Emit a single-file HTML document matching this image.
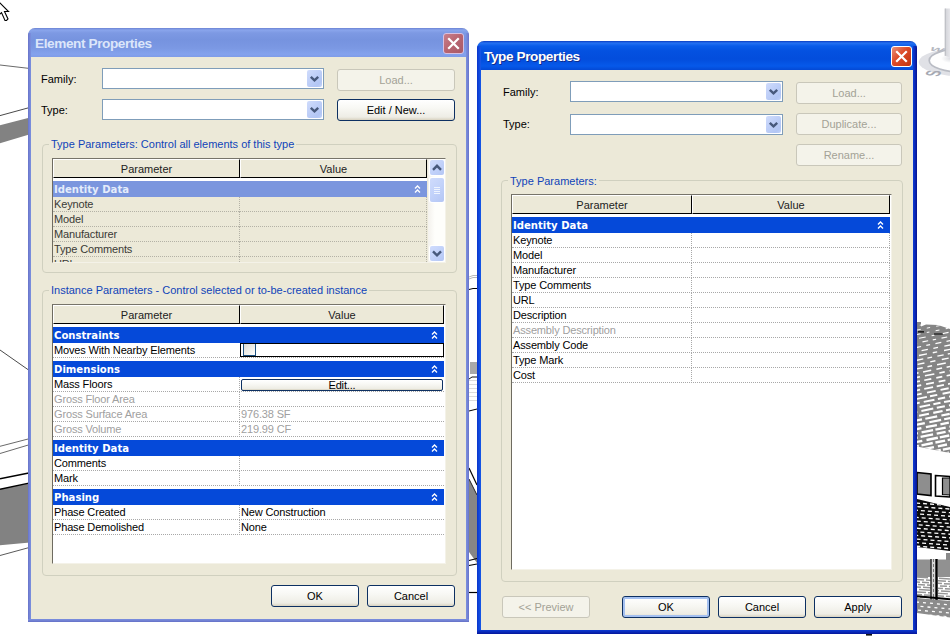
<!DOCTYPE html>
<html>
<head>
<meta charset="utf-8">
<title>Element Properties</title>
<style>
html,body{margin:0;padding:0;}
body{width:950px;height:643px;position:relative;overflow:hidden;background:#fff;
  font-family:"Liberation Sans",sans-serif;font-size:11px;color:#000;}
*{box-sizing:border-box;}
.abs{position:absolute;}
#bg{position:absolute;left:0;top:0;width:950px;height:643px;}

/* ---------- dialogs ---------- */
.dlg{position:absolute;background:#ece9d8;border-radius:7px 7px 0 0;overflow:hidden;}
.dlg .tbar{position:absolute;left:0;top:0;right:0;height:29px;}
.dlg .title{position:absolute;left:7px;top:8px;letter-spacing:-0.4px;font-weight:bold;font-size:13.6px;line-height:16px;white-space:nowrap;}
.dlg .bl,.dlg .br,.dlg .bb{position:absolute;}
.dlg .bl{left:0;top:5px;bottom:0;width:3px;}
.dlg .br{right:0;top:5px;bottom:0;width:3px;}
.dlg .bb{left:0;right:0;bottom:0;height:3px;}

/* inactive (left) */
#d1 .tbar{background:linear-gradient(#6b83d4 0,#8aa5ec 2px,#7d99e3 5px,#7693df 12px,#7b98e3 20px,#84a2ed 26px,#7f9ce8 29px);}
#d1 .title{color:#dce6fa;}
#d1 .bl{background:linear-gradient(90deg,#6773c9,#7484d6,#7b90de);}
#d1 .br{background:linear-gradient(270deg,#6773c9,#7484d6,#7b90de);}
#d1 .bb{background:linear-gradient(0deg,#6470c6,#7282d4,#7b90de);}
/* active (right) */
#d2 .tbar{background:linear-gradient(#0a3cc0 0,#2672f2 2px,#0a5ce9 5px,#0451e0 10px,#034ddc 18px,#0659ea 25px,#0449d5 29px);}
#d2 .title{color:#fff;text-shadow:1px 1px 0 #0f2c8c;}
#d2 .bl{background:linear-gradient(90deg,#0a34cc,#1048dc,#1658e6);width:4px;}
#d2 .br{background:linear-gradient(270deg,#06128c,#0a28b8,#0d3cd4);width:4px;}
#d2 .bb{background:linear-gradient(0deg,#04169a,#0828b8,#0c3ad0);height:4px;}

.close{position:absolute;width:21px;height:21px;border:1px solid #fff;border-radius:3px;}
#d1 .close{background:linear-gradient(135deg,#c8808c,#b86470 50%,#a85a68);border-color:#d8c0e0;}
#d2 .close{background:linear-gradient(135deg,#e8907a,#dc4a28 45%,#c03410);}
.close svg{position:absolute;left:0;top:0;}

/* ---------- widgets ---------- */
.lbl{position:absolute;white-space:nowrap;line-height:13px;}
.combo{position:absolute;height:21px;background:#fff;border:1px solid #7f9db9;}
.combo .dd{position:absolute;right:1px;top:1px;width:15px;height:17px;border-radius:2px;
  background:linear-gradient(135deg,#d0dcfc,#c0d0f8 40%,#b2c6f4 80%,#c2d2fa);}
.combo .dd svg{position:absolute;left:0;top:0;}
.btn{position:absolute;height:22px;border:1px solid #0d3062;border-radius:3px;text-align:center;line-height:20px;white-space:nowrap;
  background:linear-gradient(#ffffff 0,#f8f8f4 40%,#eeede5 85%,#d8d2c0 100%);}
.btn.dis{border-color:#c9c7ba;color:#a3a296;background:#f4f3ea;}
.btn.def{box-shadow:inset 0 0 0 2px #a4c0f0;}
.grp{position:absolute;border:1px solid #d0d0bf;border-radius:4px;}
.leg{position:absolute;white-space:nowrap;color:#1044b8;background:#ece9d8;padding:0 2px;line-height:13px;}

/* ---------- tables ---------- */
.tbl{position:absolute;background:#fff;border-left:1px solid #6e6b60;border-top:1px solid #77746a;border-right:1px solid #f4f2e8;border-bottom:1px solid #f4f2e8;overflow:hidden;}
.hd{position:absolute;background:#ece9d8;border:1px solid #000;border-top-color:#fff;border-left-color:#fff;text-align:center;line-height:18px;color:#222;height:19px;}
.cat{position:absolute;height:16px;background:#0549d9;color:#fff;font:bold 10.1px/17px "DejaVu Sans","Liberation Sans",sans-serif;padding-left:1px;overflow:hidden;white-space:nowrap;}
.cat svg{position:absolute;top:4px;}
.row{position:absolute;height:15px;border-bottom:1px dotted #a8a8a8;line-height:14px;white-space:nowrap;letter-spacing:-0.15px;}
.row .p{position:absolute;left:1px;top:0;}
.row .v{position:absolute;top:0;}
.row .sep{position:absolute;top:0;bottom:-1px;width:0;border-left:1px dotted #a8a8a8;}
.gray{color:#a0a0a0;}

.sb{position:absolute;width:17px;background:linear-gradient(90deg,#f3f1ec,#fefefb 40%,#fefefb);}
.sbb{position:absolute;left:2px;width:14px;height:15px;border-radius:2px;background:linear-gradient(135deg,#d0dcfc,#c2d2fa 50%,#b4c6f4);box-shadow:0 0 0 1px #fff;}
.sbb svg{position:absolute;left:0;top:0;}
#t1 .row{border-bottom-color:#b4b2a6;}
#t1 .row .sep{border-left-color:#b4b2a6;}
</style>
</head>
<body>
<svg id="bg" viewBox="0 0 950 643">
<g fill="none" stroke-linecap="butt">
<path d="M0 65L30 68.5" stroke="#6a6a6a" stroke-width="1"/>
<path d="M0 115.6L30 107.4" stroke="#4a4a4a" stroke-width="1"/>
<path d="M0 125.2L30 117.5V134.2L0 143.2Z" fill="#828282"/>
<path d="M0 350L30 371" stroke="#4a4a4a" stroke-width="1"/>
<path d="M0 446.3L30 438.5" stroke="#6a6a6a" stroke-width="1"/>
<path d="M0 453.5L30 444.5" stroke="#6a6a6a" stroke-width="1"/>
<path d="M0 478.7L30 472.7" stroke="#000" stroke-width="1.4"/>
<path d="M0 489.2L30 482.9V542.4L0 545.2Z" fill="#828282"/>
<path d="M0 489.2L30 482.9" stroke="#000" stroke-width="1.4"/>
<path d="M0 555.5L30 547.3" stroke="#5a5a5a" stroke-width="1"/>
</g>
<path d="M-3 0L8.5 11.5H4.5L8 19L6.5 20.5H5L1.5 12.6L-3 16.5Z" fill="#fff" stroke="#000" stroke-width="1.1" stroke-linejoin="miter"/>
<g>
<path d="M469 277L473 275.5H477M469 279L473 277.5H477" stroke="#a8a8a8" stroke-width="0.8" fill="none"/><path d="M469 289.5L473 288.5H477" stroke="#000" stroke-width="1" fill="none"/>
<rect x="470" y="362" width="7" height="12" fill="#a9a9a9"/><path d="M469 379L472 377H477" stroke="#111" stroke-width="1" fill="none"/>
<path d="M469 380.5H477" stroke="#dcdcdc" stroke-width="1"/>
<path d="M469 384.5H477" stroke="#dcdcdc" stroke-width="1"/>
<path d="M469 388.5H477" stroke="#dcdcdc" stroke-width="1"/>
<path d="M469 392.5H477" stroke="#dcdcdc" stroke-width="1"/>
<path d="M469 396.5H477" stroke="#dcdcdc" stroke-width="1"/>
<path d="M469 400.5H477" stroke="#dcdcdc" stroke-width="1"/>
<path d="M469 411L477 409" stroke="#000" stroke-width="1"/>
<path d="M469 479L477 495V563L469 552Z" fill="#868686"/>
<path d="M469 468L477 485" stroke="#000" stroke-width="1.2" fill="none"/><path d="M469 479L477 495" stroke="#222" stroke-width="1" fill="none"/>
<path d="M469 560.5L477 558.5M469 565.5L477 564" stroke="#000" stroke-width="1.1" fill="none"/>
<path d="M469 592.5H477" stroke="#000" stroke-width="1.2"/>
</g>
<defs><clipPath id="cu"><path d="M917 322H921V326.5L926 324.5L938 325L950 329V453L917 446.5Z"/></clipPath><clipPath id="cl"><path d="M917 499L950 507V551L917 547Z"/></clipPath><clipPath id="cb"><path d="M917 598L950 601V617.5L917 613Z"/></clipPath><clipPath id="cm"><path d="M917 576H950V598H917Z"/></clipPath><linearGradient id="cube" x1="0" x2="1"><stop offset="0" stop-color="#d2d3d8"/><stop offset="1" stop-color="#e6e6ea"/></linearGradient><radialGradient id="shad"><stop offset="0" stop-color="#dcdde2"/><stop offset="1" stop-color="#fefefe"/></radialGradient></defs>
<ellipse cx="964.7" cy="62.1" rx="46" ry="14.4" fill="#e0e1e6"/>
<ellipse cx="965.2" cy="60.4" rx="36" ry="12.1" fill="#fefefe" stroke="#b9bcc4" stroke-width="1.7"/>
<ellipse cx="951" cy="58.5" rx="10" ry="4.5" fill="url(#shad)"/>
<path d="M945.2 8.5H950V57.5L945.2 55.8Z" fill="url(#cube)"/>
<path d="M945.2 8.5V55.8" stroke="#b4b5bc" stroke-width="1"/>
<text font-family="Liberation Sans, sans-serif" font-size="21" font-weight="bold" fill="#a6a9b2" text-anchor="middle" transform="translate(933 73.2) scale(1 0.42) rotate(-80)" y="7.5">S</text>
<text font-family="Liberation Sans, sans-serif" font-size="15" font-weight="bold" fill="#b4b7bf" text-anchor="middle" transform="translate(937 49.6) scale(1 0.36) rotate(18)" y="5">W</text>
<g clip-path="url(#cu)">
<rect x="917" y="318" width="33" height="140" fill="#858585"/>
<path d="M916 326.0L951 319.0" stroke="#fff" stroke-width="0.90" stroke-dasharray="2.9 7.1 5.8 5.9" stroke-dashoffset="6.1"/>
<path d="M916 330.3L951 323.3" stroke="#fff" stroke-width="0.96" stroke-dasharray="3.4 6.2 4.8 6.1" stroke-dashoffset="9.5"/>
<path d="M916 334.6L951 327.6" stroke="#fff" stroke-width="1.02" stroke-dasharray="2.7 6.3 3.9 6.4" stroke-dashoffset="8.3"/>
<path d="M916 338.9L951 331.9" stroke="#fff" stroke-width="1.08" stroke-dasharray="2.9 7.6 6.8 6.0" stroke-dashoffset="7.4"/>
<path d="M916 343.2L951 336.2" stroke="#fff" stroke-width="1.13" stroke-dasharray="3.4 5.5 5.8 4.7" stroke-dashoffset="2.3"/>
<path d="M916 347.5L951 340.5" stroke="#fff" stroke-width="1.19" stroke-dasharray="3.9 5.4 6.0 5.3" stroke-dashoffset="10.1"/>
<path d="M916 351.8L951 344.8" stroke="#fff" stroke-width="1.25" stroke-dasharray="4.7 6.5 6.4 5.6" stroke-dashoffset="5.5"/>
<path d="M916 356.1L951 349.1" stroke="#fff" stroke-width="1.31" stroke-dasharray="4.5 7.0 8.2 5.9" stroke-dashoffset="8.5"/>
<path d="M916 360.4L951 353.4" stroke="#fff" stroke-width="1.37" stroke-dasharray="4.8 5.4 6.4 4.2" stroke-dashoffset="9.2"/>
<path d="M916 364.7L951 357.7" stroke="#fff" stroke-width="1.43" stroke-dasharray="5.3 6.5 7.0 5.9" stroke-dashoffset="10.2"/>
<path d="M916 369.0L951 362.0" stroke="#fff" stroke-width="1.49" stroke-dasharray="4.7 5.1 8.9 4.8" stroke-dashoffset="11.8"/>
<path d="M916 373.3L951 366.3" stroke="#fff" stroke-width="1.55" stroke-dasharray="5.8 4.6 8.3 5.3" stroke-dashoffset="3.2"/>
<path d="M916 377.6L951 370.6" stroke="#fff" stroke-width="1.60" stroke-dasharray="5.5 5.0 9.6 5.1" stroke-dashoffset="1.4"/>
<path d="M916 381.9L951 374.9" stroke="#fff" stroke-width="1.66" stroke-dasharray="6.1 4.4 7.2 5.1" stroke-dashoffset="2.1"/>
<path d="M916 386.2L951 379.2" stroke="#fff" stroke-width="1.72" stroke-dasharray="6.9 5.0 8.0 4.8" stroke-dashoffset="1.6"/>
<path d="M916 390.5L951 383.5" stroke="#fff" stroke-width="1.78" stroke-dasharray="7.4 4.2 9.0 3.7" stroke-dashoffset="3.2"/>
<path d="M916 394.8L951 387.8" stroke="#fff" stroke-width="1.84" stroke-dasharray="8.3 5.4 8.9 4.9" stroke-dashoffset="2.5"/>
<path d="M916 399.1L951 392.1" stroke="#fff" stroke-width="1.90" stroke-dasharray="7.4 5.4 10.2 3.2" stroke-dashoffset="11.9"/>
<path d="M916 403.4L951 396.4" stroke="#fff" stroke-width="1.96" stroke-dasharray="7.4 4.1 10.9 3.5" stroke-dashoffset="3.6"/>
<path d="M916 407.7L951 400.7" stroke="#fff" stroke-width="2.01" stroke-dasharray="7.3 3.6 10.7 3.3" stroke-dashoffset="7.2"/>
<path d="M916 412.0L951 405.0" stroke="#fff" stroke-width="2.07" stroke-dasharray="8.2 4.2 12.1 3.6" stroke-dashoffset="6.9"/>
<path d="M916 416.3L951 409.3" stroke="#fff" stroke-width="2.13" stroke-dasharray="9.5 3.5 10.0 4.4" stroke-dashoffset="9.8"/>
<path d="M916 420.6L951 413.6" stroke="#fff" stroke-width="2.19" stroke-dasharray="8.5 3.4 12.1 4.3" stroke-dashoffset="2.4"/>
<path d="M916 424.9L951 417.9" stroke="#fff" stroke-width="2.25" stroke-dasharray="10.2 4.6 12.0 3.1" stroke-dashoffset="1.2"/>
<path d="M916 429.2L951 422.2" stroke="#fff" stroke-width="2.31" stroke-dasharray="8.6 4.6 11.2 3.6" stroke-dashoffset="3.1"/>
<path d="M916 433.5L951 426.5" stroke="#fff" stroke-width="2.37" stroke-dasharray="10.5 3.8 11.7 2.4" stroke-dashoffset="8.6"/>
<path d="M916 437.8L951 430.8" stroke="#fff" stroke-width="2.40" stroke-dasharray="9.1 3.0 12.7 3.7" stroke-dashoffset="7.4"/>
<path d="M916 442.1L951 435.1" stroke="#fff" stroke-width="2.40" stroke-dasharray="9.6 4.3 11.6 2.0" stroke-dashoffset="3.2"/>
<path d="M916 446.4L951 439.4" stroke="#fff" stroke-width="2.40" stroke-dasharray="9.9 2.6 11.5 2.7" stroke-dashoffset="6.9"/>
<path d="M916 450.7L951 443.7" stroke="#fff" stroke-width="2.40" stroke-dasharray="9.3 3.2 13.7 4.0" stroke-dashoffset="7.9"/>
<path d="M916 455.0L951 448.0" stroke="#fff" stroke-width="2.40" stroke-dasharray="10.4 3.7 11.4 2.1" stroke-dashoffset="0.2"/>
<path d="M916 459.3L951 452.3" stroke="#fff" stroke-width="2.40" stroke-dasharray="10.8 3.9 13.9 2.0" stroke-dashoffset="7.6"/>
<path d="M916 463.6L951 456.6" stroke="#fff" stroke-width="2.40" stroke-dasharray="10.0 4.0 12.0 4.0" stroke-dashoffset="0.9"/>
</g>
<path d="M918 331.8H924M934 334H943" stroke="#000" stroke-width="1.2"/>
<path d="M917 472.5L931 474V495.5L917 494Z" fill="#8e8e8e" stroke="#000" stroke-width="1.6"/>
<path d="M935.5 475.5L950 476.5V497L935.5 496Z" fill="#fff" stroke="#000" stroke-width="1.6"/>
<path d="M942.5 478H950V495L942.5 494.5Z" fill="#8e8e8e" stroke="#000" stroke-width="1.2"/>
<g clip-path="url(#cl)">
<rect x="917" y="497" width="33" height="58" fill="#0c0c0c"/>
<path d="M916 503.0L951 505.5" stroke="#fff" stroke-width="1.3" stroke-dasharray="4 3" stroke-dashoffset="6.9"/>
<path d="M916 506.6L951 509.1" stroke="#fff" stroke-width="1.3" stroke-dasharray="4 3" stroke-dashoffset="5.6"/>
<path d="M916 510.2L951 512.7" stroke="#fff" stroke-width="1.3" stroke-dasharray="4 3" stroke-dashoffset="2.1"/>
<path d="M916 513.8L951 516.3" stroke="#fff" stroke-width="1.3" stroke-dasharray="4 3" stroke-dashoffset="2.9"/>
<path d="M916 517.4L951 519.9" stroke="#fff" stroke-width="1.3" stroke-dasharray="4 3" stroke-dashoffset="1.3"/>
<path d="M916 521.0L951 523.5" stroke="#fff" stroke-width="1.3" stroke-dasharray="4 3" stroke-dashoffset="6.2"/>
<path d="M916 524.6L951 527.1" stroke="#fff" stroke-width="1.3" stroke-dasharray="4 3" stroke-dashoffset="4.3"/>
<path d="M916 528.2L951 530.7" stroke="#fff" stroke-width="1.3" stroke-dasharray="4 3" stroke-dashoffset="6.2"/>
<path d="M916 531.8L951 534.3" stroke="#fff" stroke-width="1.3" stroke-dasharray="4 3" stroke-dashoffset="2.6"/>
<path d="M916 535.4L951 537.9" stroke="#fff" stroke-width="1.3" stroke-dasharray="4 3" stroke-dashoffset="1.8"/>
<path d="M916 539.0L951 541.5" stroke="#fff" stroke-width="1.3" stroke-dasharray="4 3" stroke-dashoffset="6.5"/>
<path d="M916 542.6L951 545.1" stroke="#fff" stroke-width="1.3" stroke-dasharray="4 3" stroke-dashoffset="7.9"/>
<path d="M916 546.2L951 548.7" stroke="#fff" stroke-width="1.3" stroke-dasharray="4 3" stroke-dashoffset="6.8"/>
<path d="M916 549.8L951 552.3" stroke="#fff" stroke-width="1.3" stroke-dasharray="4 3" stroke-dashoffset="6.4"/>
<path d="M916 553.4L951 555.9" stroke="#fff" stroke-width="1.3" stroke-dasharray="4 3" stroke-dashoffset="6.5"/>
</g>
<path d="M917 559.5H950V577H917Z" fill="#919191"/>
<rect x="946" y="553" width="4" height="7" fill="#8a8a8a"/>
<g clip-path="url(#cm)">
<path d="M917 577L950 579" stroke="#959595" stroke-width="1.5" stroke-dasharray="11 2 7 2" stroke-dashoffset="0"/>
<path d="M917 579.5L950 581.5" stroke="#959595" stroke-width="1.5" stroke-dasharray="11 2 7 2" stroke-dashoffset="4"/>
<path d="M917 582L950 584" stroke="#959595" stroke-width="1.5" stroke-dasharray="11 2 7 2" stroke-dashoffset="8"/>
<path d="M917 584.5L950 586.5" stroke="#959595" stroke-width="1.5" stroke-dasharray="11 2 7 2" stroke-dashoffset="12"/>
<path d="M917 587L950 589" stroke="#959595" stroke-width="1.5" stroke-dasharray="11 2 7 2" stroke-dashoffset="16"/>
<path d="M917 589.5L950 591.5" stroke="#959595" stroke-width="1.5" stroke-dasharray="11 2 7 2" stroke-dashoffset="20"/>
<path d="M917 592L950 594" stroke="#959595" stroke-width="1.5" stroke-dasharray="11 2 7 2" stroke-dashoffset="24"/>
<path d="M917 594.5L950 596.5" stroke="#959595" stroke-width="1.5" stroke-dasharray="11 2 7 2" stroke-dashoffset="28"/>
<path d="M917 597L950 599" stroke="#959595" stroke-width="1.5" stroke-dasharray="11 2 7 2" stroke-dashoffset="32"/>
</g>
<rect x="930.5" y="559" width="7.5" height="42" fill="#d8d8d8"/>
<path d="M931 559V601" stroke="#000" stroke-width="1.2"/>
<path d="M936.5 559V600" stroke="#000" stroke-width="2.4"/>
<path d="M933.5 559V601" stroke="#777" stroke-width="1" stroke-dasharray="3 2"/>
<path d="M917 596.3L950 599.3" stroke="#000" stroke-width="2"/>
<g clip-path="url(#cb)">
<rect x="917" y="596" width="33" height="24" fill="#8c8c8c"/>
<path d="M916 602L951 605" stroke="#fff" stroke-width="1.3" stroke-dasharray="3 4" stroke-dashoffset="0.0"/>
<path d="M916 606L951 609" stroke="#fff" stroke-width="1.3" stroke-dasharray="3 4" stroke-dashoffset="2.5"/>
<path d="M916 610L951 613" stroke="#fff" stroke-width="1.3" stroke-dasharray="3 4" stroke-dashoffset="5.0"/>
<path d="M916 614L951 617" stroke="#fff" stroke-width="1.3" stroke-dasharray="3 4" stroke-dashoffset="7.5"/>
</g>
<rect x="866" y="634" width="6" height="1.6" fill="#111"/>
</svg>

<!-- ================= LEFT DIALOG ================= -->
<div class="dlg" id="d1" style="left:28px;top:28px;width:441px;height:594px;">
  <div class="tbar"></div><div class="bl"></div><div class="br"></div><div class="bb"></div>
  <div class="title">Element Properties</div>
  <div class="close" style="left:415px;top:5px;"><svg width="19" height="19" viewBox="0 0 19 19"><path d="M5 5L14 14M14 5L5 14" stroke="#fff" stroke-width="2.2" stroke-linecap="square"/></svg></div>
  <div class="lbl" style="left:13px;top:45px;">Family:</div>
  <div class="lbl" style="left:13px;top:76px;">Type:</div>
  <div class="combo" style="left:74px;top:40px;width:222px;"><div class="dd"><svg width="15" height="17" viewBox="0 0 15 17"><path d="M3.8 6.8L7.5 10.4L11.2 6.8" fill="none" stroke="#47597c" stroke-width="2.4"/></svg></div></div>
  <div class="combo" style="left:74px;top:71px;width:222px;"><div class="dd"><svg width="15" height="17" viewBox="0 0 15 17"><path d="M3.8 6.8L7.5 10.4L11.2 6.8" fill="none" stroke="#47597c" stroke-width="2.4"/></svg></div></div>
  <div class="btn dis" style="left:309px;top:41px;width:118px;">Load...</div>
  <div class="btn" style="left:309px;top:71px;width:118px;">Edit / New...</div>

  <div class="grp" style="left:14px;top:116px;width:415px;height:129px;"></div>
  <div class="leg" style="left:21px;top:110px;">Type Parameters: Control all elements of this type</div>
  <div class="tbl" id="t1" style="left:24px;top:130px;width:394px;height:105px;background:#ece9d8;">
    <div class="hd" style="left:0;top:0;width:187px;">Parameter</div>
    <div class="hd" style="left:187px;top:0;width:187px;">Value</div>
    <div class="abs" style="left:0;top:19px;width:374px;height:3px;background:#fff;"></div>
    <div class="cat" style="left:0;top:22px;width:374px;background:#7b96de;color:#e4ecfb;">Identity Data<svg style="left:361px" width="7" height="8" viewBox="0 0 7 8"><path d="M1 3.5L3.5 1L6 3.5M1 7.5L3.5 5L6 7.5" fill="none" stroke="#fff" stroke-width="1.3"/></svg></div>
    <div class="row" style="left:0;top:38px;width:374px;"><span class="p" style="color:#3a3a36">Keynote</span><i class="sep" style="left:186px"></i><i class="sep" style="left:373px"></i></div>
    <div class="row" style="left:0;top:53px;width:374px;"><span class="p" style="color:#3a3a36">Model</span><i class="sep" style="left:186px"></i><i class="sep" style="left:373px"></i></div>
    <div class="row" style="left:0;top:68px;width:374px;"><span class="p" style="color:#3a3a36">Manufacturer</span><i class="sep" style="left:186px"></i><i class="sep" style="left:373px"></i></div>
    <div class="row" style="left:0;top:83px;width:374px;"><span class="p" style="color:#3a3a36">Type Comments</span><i class="sep" style="left:186px"></i><i class="sep" style="left:373px"></i></div>
    <div class="row" style="left:0;top:98px;width:374px;"><span class="p" style="color:#3a3a36">URL</span><i class="sep" style="left:186px"></i><i class="sep" style="left:373px"></i></div>
    <div class="sb" style="left:375px;top:0;height:103px;">
      <div class="sbb" style="top:1px;"><svg width="14" height="15" viewBox="0 0 14 15"><path d="M3 9.8L7 5.8L11 9.8" fill="none" stroke="#47597c" stroke-width="2.4"/></svg></div>
      <div class="sbb" style="top:19px;height:24px;"><svg width="14" height="24" viewBox="0 0 14 24"><path d="M4 9.5H10M4 11.5H10M4 13.5H10M4 15.5H10" stroke="#eef4fe" stroke-width="1"/></svg></div>
      <div class="sbb" style="top:87px;"><svg width="14" height="15" viewBox="0 0 14 15"><path d="M3 5.4L7 9.4L11 5.4" fill="none" stroke="#47597c" stroke-width="2.4"/></svg></div>
    </div>
  </div>

  <div class="grp" style="left:14px;top:262px;width:415px;height:286px;"></div>
  <div class="leg" style="left:21px;top:256px;">Instance Parameters - Control selected or to-be-created instance</div>
  <div class="tbl" id="t2" style="left:24px;top:276px;width:394px;height:260px;">
    <div class="hd" style="left:0;top:0;width:187px;">Parameter</div>
    <div class="hd" style="left:187px;top:0;width:204px;">Value</div>

    <div class="cat" style="left:0;top:22px;width:391px;">Constraints<svg style="left:378px" width="7" height="8" viewBox="0 0 7 8"><path d="M1 3.5L3.5 1L6 3.5M1 7.5L3.5 5L6 7.5" fill="none" stroke="#fff" stroke-width="1.3"/></svg></div>
    <div class="row" style="left:0;top:38px;width:391px;"><span class="p">Moves With Nearby Elements</span>
      <div class="abs" style="left:187px;top:0;width:204px;height:14px;border:1px solid #000;background:#fff;overflow:hidden;"><div class="abs" style="left:2px;top:-1px;width:13px;height:13px;border:1px solid #1c5180;background:linear-gradient(135deg,#dcdcd7,#f1f1ed 60%,#fff);"></div></div></div>

    <div class="cat" style="left:0;top:56px;width:391px;">Dimensions<svg style="left:378px" width="7" height="8" viewBox="0 0 7 8"><path d="M1 3.5L3.5 1L6 3.5M1 7.5L3.5 5L6 7.5" fill="none" stroke="#fff" stroke-width="1.3"/></svg></div>
    <div class="row" style="left:0;top:72px;width:391px;"><span class="p">Mass Floors</span><i class="sep" style="left:186px"></i>
      <div class="btn" style="left:188px;top:2px;width:202px;height:12px;line-height:11px;overflow:hidden;border-radius:2px;">Edit...</div></div>
    <div class="row gray" style="left:0;top:87px;width:391px;"><span class="p">Gross Floor Area</span><i class="sep" style="left:186px"></i></div>
    <div class="row gray" style="left:0;top:102px;width:391px;"><span class="p">Gross Surface Area</span><i class="sep" style="left:186px"></i><span class="v" style="left:188px">976.38 SF</span></div>
    <div class="row gray" style="left:0;top:117px;width:391px;"><span class="p">Gross Volume</span><i class="sep" style="left:186px"></i><span class="v" style="left:188px">219.99 CF</span></div>

    <div class="cat" style="left:0;top:135px;width:391px;">Identity Data<svg style="left:378px" width="7" height="8" viewBox="0 0 7 8"><path d="M1 3.5L3.5 1L6 3.5M1 7.5L3.5 5L6 7.5" fill="none" stroke="#fff" stroke-width="1.3"/></svg></div>
    <div class="row" style="left:0;top:151px;width:391px;"><span class="p">Comments</span><i class="sep" style="left:186px"></i></div>
    <div class="row" style="left:0;top:166px;width:391px;"><span class="p">Mark</span><i class="sep" style="left:186px"></i></div>

    <div class="cat" style="left:0;top:184px;width:391px;">Phasing<svg style="left:378px" width="7" height="8" viewBox="0 0 7 8"><path d="M1 3.5L3.5 1L6 3.5M1 7.5L3.5 5L6 7.5" fill="none" stroke="#fff" stroke-width="1.3"/></svg></div>
    <div class="row" style="left:0;top:200px;width:391px;"><span class="p">Phase Created</span><i class="sep" style="left:186px"></i><span class="v" style="left:188px">New Construction</span></div>
    <div class="row" style="left:0;top:215px;width:391px;"><span class="p">Phase Demolished</span><i class="sep" style="left:186px"></i><span class="v" style="left:188px">None</span></div>
  </div>

  <div class="btn" style="left:243px;top:557px;width:88px;">OK</div>
  <div class="btn" style="left:339px;top:557px;width:88px;">Cancel</div>
</div>

<!-- ================= RIGHT DIALOG ================= -->
<div class="dlg" id="d2" style="left:477px;top:41px;width:440px;height:593px;">
  <div class="tbar"></div><div class="bl"></div><div class="br"></div><div class="bb"></div>
  <div class="title">Type Properties</div>
  <div class="close" style="left:414px;top:5px;"><svg width="19" height="19" viewBox="0 0 19 19"><path d="M5 5L14 14M14 5L5 14" stroke="#fff" stroke-width="2.2" stroke-linecap="square"/></svg></div>
  <div class="lbl" style="left:26px;top:45px;">Family:</div>
  <div class="lbl" style="left:26px;top:77px;">Type:</div>
  <div class="combo" style="left:93px;top:40px;width:213px;"><div class="dd"><svg width="15" height="17" viewBox="0 0 15 17"><path d="M3.8 6.8L7.5 10.4L11.2 6.8" fill="none" stroke="#47597c" stroke-width="2.4"/></svg></div></div>
  <div class="combo" style="left:93px;top:73px;width:213px;"><div class="dd"><svg width="15" height="17" viewBox="0 0 15 17"><path d="M3.8 6.8L7.5 10.4L11.2 6.8" fill="none" stroke="#47597c" stroke-width="2.4"/></svg></div></div>
  <div class="btn dis" style="left:319px;top:41px;width:106px;">Load...</div>
  <div class="btn dis" style="left:319px;top:72px;width:106px;">Duplicate...</div>
  <div class="btn dis" style="left:319px;top:103px;width:106px;">Rename...</div>

  <div class="grp" style="left:24px;top:139px;width:402px;height:402px;"></div>
  <div class="leg" style="left:31px;top:134px;">Type Parameters:</div>
  <div class="tbl" id="t3" style="left:34px;top:153px;width:381px;height:376px;">
    <div class="hd" style="left:0;top:0;width:180px;">Parameter</div>
    <div class="hd" style="left:180px;top:0;width:198px;">Value</div>
    <div class="cat" style="left:0;top:22px;width:378px;">Identity Data<svg style="left:365px" width="7" height="8" viewBox="0 0 7 8"><path d="M1 3.5L3.5 1L6 3.5M1 7.5L3.5 5L6 7.5" fill="none" stroke="#fff" stroke-width="1.3"/></svg></div>
    <div class="row" style="left:0;top:38px;width:378px;"><span class="p">Keynote</span><i class="sep" style="left:179px"></i><i class="sep" style="left:377px"></i></div>
    <div class="row" style="left:0;top:53px;width:378px;"><span class="p">Model</span><i class="sep" style="left:179px"></i><i class="sep" style="left:377px"></i></div>
    <div class="row" style="left:0;top:68px;width:378px;"><span class="p">Manufacturer</span><i class="sep" style="left:179px"></i><i class="sep" style="left:377px"></i></div>
    <div class="row" style="left:0;top:83px;width:378px;"><span class="p">Type Comments</span><i class="sep" style="left:179px"></i><i class="sep" style="left:377px"></i></div>
    <div class="row" style="left:0;top:98px;width:378px;"><span class="p">URL</span><i class="sep" style="left:179px"></i><i class="sep" style="left:377px"></i></div>
    <div class="row" style="left:0;top:113px;width:378px;"><span class="p">Description</span><i class="sep" style="left:179px"></i><i class="sep" style="left:377px"></i></div>
    <div class="row gray" style="left:0;top:128px;width:378px;"><span class="p">Assembly Description</span><i class="sep" style="left:179px"></i><i class="sep" style="left:377px"></i></div>
    <div class="row" style="left:0;top:143px;width:378px;"><span class="p">Assembly Code</span><i class="sep" style="left:179px"></i><i class="sep" style="left:377px"></i></div>
    <div class="row" style="left:0;top:158px;width:378px;"><span class="p">Type Mark</span><i class="sep" style="left:179px"></i><i class="sep" style="left:377px"></i></div>
    <div class="row" style="left:0;top:173px;width:378px;"><span class="p">Cost</span><i class="sep" style="left:179px"></i><i class="sep" style="left:377px"></i></div>
  </div>

  <div class="btn dis" style="left:25px;top:555px;width:88px;">&lt;&lt; Preview</div>
  <div class="btn def" style="left:145px;top:555px;width:88px;">OK</div>
  <div class="btn" style="left:241px;top:555px;width:88px;">Cancel</div>
  <div class="btn" style="left:337px;top:555px;width:88px;">Apply</div>
</div>
</body>
</html>
